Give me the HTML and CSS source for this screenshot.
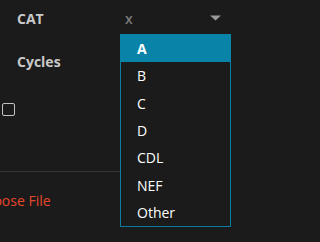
FILE: index.html
```html
<!DOCTYPE html>
<html>
<head>
<meta charset="utf-8">
<link rel="stylesheet" href="styles.css">
</head>
<body>
<div class="form">
  <div class="row">
    <div class="label">CAT</div>
    <div class="select">
      <div class="control">
        <span class="placeholder">x</span>
        <svg class="arrow" width="11" height="6" viewBox="0 0 11 6"><path d="M0 0.5 H11 L5.5 5.5 Z" fill="#9a9a9a"/></svg>
      </div>
      <ul class="menu">
        <li class="option selected">A</li>
        <li class="option">B</li>
        <li class="option">C</li>
        <li class="option">D</li>
        <li class="option">CDL</li>
        <li class="option">NEF</li>
        <li class="option">Other</li>
      </ul>
    </div>
  </div>
  <div class="row row-cycles">
    <div class="label">Cycles</div>
  </div>
  <div class="check-row">
    <span class="checkbox"></span>
  </div>
  <div class="divider"></div>
  <div class="file">Choose File</div>
</div>
</body>
</html>
```
FILE: styles.css
```css
html, body {
  margin: 0;
  padding: 0;
  background: #1b1b1b;
  overflow: hidden;
}
body {
  font-family: "Open Sans", "Liberation Sans", sans-serif;
  font-size: 14px;
  line-height: 19px;
  color: #cccccc;
  width: 248px;
  height: 242px;
}
.form {
  padding-top: 9px;
}
.row {
  display: flex;
  height: 19px;
}
.label {
  width: 120px;
  padding-left: 17px;
  box-sizing: border-box;
  font-weight: 700;
  color: #c9c9c9;
}
.select {
  position: relative;
  width: 111px;
}
.control {
  display: flex;
  align-items: center;
  justify-content: space-between;
  height: 19px;
  padding: 0 10px 0 5px;
}
.placeholder {
  color: #787878;
  font-weight: 600;
}
.arrow {
  display: block;
  margin-top: -1px;
}
.menu {
  position: absolute;
  left: 0;
  top: 25px;
  width: 111px;
  box-sizing: border-box;
  margin: 0;
  padding: 0;
  list-style: none;
  border: 1px solid #0b7c9e;
  background: #1b1b1b;
  z-index: 2;
}
.option {
  height: 27.3px;
  display: flex;
  align-items: center;
  padding-left: 16px;
  color: #ffffff;
}
.option.selected {
  background: #0984a8;
  font-weight: 700;
  margin: -1px -1px 0 -1px;
  padding-left: 17px;
  height: 28.3px;
}
.row-cycles {
  margin-top: 24px;
}
.check-row {
  margin-top: 32px;
  padding-left: 2px;
  height: 13px;
}
.checkbox {
  display: block;
  width: 13px;
  height: 13px;
  box-sizing: border-box;
  border: 1.5px solid #c2c2c2;
  border-radius: 2px;
}
.divider {
  margin-top: 55px;
  width: 160px;
  height: 1px;
  background: #343434;
}
.file {
  margin-top: 19px;
  margin-left: -24px;
  color: #e5472b;
  white-space: nowrap;
}
```
